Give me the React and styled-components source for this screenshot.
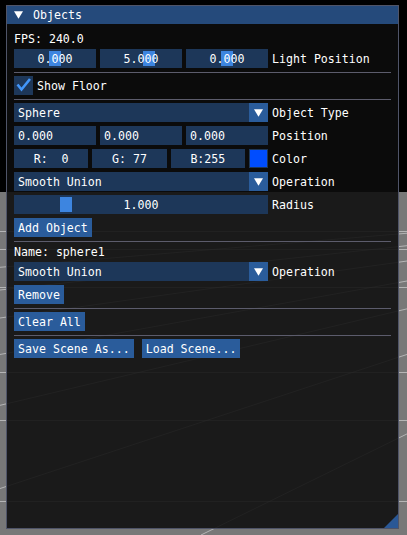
import React from 'react';
import styled, { createGlobalStyle } from 'styled-components';

const FRAME = '#1d3759';
const BUTTON = '#2a5c9b';
const TITLE = '#254a7b';
const SEP = '#5c5c6c';
const BORDER = '#4f5468';
const GRAB = '#3d85e0';
const CHECK = '#4296fa';

const GlobalStyle = createGlobalStyle`
  html, body {
    margin: 0;
    padding: 0;
    background: #000;
    overflow: hidden;
  }
  * { box-sizing: border-box; }
`;

const Page = styled.div`
  position: relative;
  width: 407px;
  height: 535px;
  overflow: hidden;
  font-family: "DejaVu Sans Mono", "Liberation Mono", monospace;
  font-size: 11.6px;
  color: #fff;
`;

const Scene = styled.svg`
  position: absolute;
  left: 0;
  top: 0;
`;

const Window = styled.div`
  position: absolute;
  left: 6px;
  top: 5px;
  width: 393px;
  height: 524px;
  border: 1px solid ${BORDER};
  background: rgba(12, 12, 12, 0.88);
  display: flex;
  flex-direction: column;
`;

const TitleBar = styled.div`
  height: 18px;
  background: ${TITLE};
  display: flex;
  align-items: center;
  padding-left: 7px;
  gap: 10px;
  line-height: 18px;
`;

const Content = styled.div`
  flex: 1;
  padding: 8px 7px;
  display: flex;
  flex-direction: column;
  gap: 4px;
`;

const Text = styled.div`
  height: 13px;
  line-height: 14px;
  white-space: pre;
`;

const Row = styled.div`
  display: flex;
  align-items: center;
  gap: ${p => p.$gap || 4}px;
  height: 19px;
`;

const Group = styled.div`
  width: 254px;
  display: grid;
  grid-template-columns: ${p => p.$cols};
  gap: 4px;
`;

const Frame = styled.div`
  position: relative;
  height: 19px;
  line-height: 20px;
  background: ${FRAME};
  padding: 0 4px;
  white-space: pre;
  text-align: ${p => p.$center ? 'center' : 'left'};
  overflow: hidden;
`;

const FrameText = styled.span`
  position: relative;
`;

const Grab = styled.div`
  position: absolute;
  top: 2px;
  width: 12px;
  height: 15px;
  background: ${GRAB};
`;

const Label = styled.span`
  line-height: 20px;
  white-space: pre;
`;

const ComboBox = styled.div`
  width: 254px;
  height: 19px;
  display: flex;
  background: ${FRAME};
`;

const ComboText = styled.div`
  flex: 1;
  padding-left: 4px;
  line-height: 20px;
`;

const ArrowBtn = styled.div`
  width: 19px;
  height: 19px;
  background: ${BUTTON};
  display: flex;
  align-items: center;
  justify-content: center;
`;

const Swatch = styled.div`
  height: 19px;
  background: ${p => p.$color};
  border: 1px solid ${FRAME};
`;

const CheckBox = styled.div`
  width: 19px;
  height: 19px;
  background: ${FRAME};
  display: flex;
  align-items: center;
  justify-content: center;
`;

const Button = styled.div`
  height: 19px;
  line-height: 20px;
  padding: 0 4px;
  background: ${BUTTON};
  white-space: pre;
`;

const Separator = styled.div`
  height: 1px;
  background: ${SEP};
  margin-bottom: -1px;
`;

const ResizeGrip = styled.svg`
  position: absolute;
  right: 0;
  bottom: 0;
`;

const DownArrow = () => (
  <svg width="9" height="8" viewBox="0 0 9 8">
    <polygon points="0,0.2 9,0.2 4.5,7.8" fill="#fff" />
  </svg>
);

const Slider = ({ value, min, max, width, center = true }) => {
  const t = (value - min) / (max - min);
  const left = 2 + (width - 4 - 12) * t;
  return (
    <Frame $center={center}>
      <Grab style={{ left }} />
      <FrameText>{value.toFixed(3)}</FrameText>
    </Frame>
  );
};

const Combo = ({ text }) => (
  <ComboBox>
    <ComboText>{text}</ComboText>
    <ArrowBtn><DownArrow /></ArrowBtn>
  </ComboBox>
);

const horizon = 192;
const vp = 900;
const hLines = [231, 249, 287, 372, 420, 501];
const dLines = [201, -141, -547, -1000, -1550, -2250, -3200];

const Background = () => (
  <Scene width="407" height="535" viewBox="0 0 407 535">
    <rect x="0" y="0" width="407" height={horizon} fill="#000" />
    <rect x="0" y={horizon} width="407" height={535 - horizon} fill="#787878" />
    {hLines.map(y => (
      <line key={y} x1="0" y1={y + 0.5} x2="407" y2={y + 0.5} stroke="#fff" strokeOpacity="0.45" strokeWidth="1" />
    ))}
    {dLines.map(x => (
      <line key={x} x1={vp} y1={horizon} x2={x} y2="535" stroke="#fff" strokeOpacity="0.45" strokeWidth="1" />
    ))}
  </Scene>
);

export default function App() {
  return (
    <Page>
      <GlobalStyle />
      <Background />
      <Window>
        <TitleBar>
          <DownArrow />
          <span>Objects</span>
        </TitleBar>
        <Content>
          <Text>FPS: 240.0</Text>
          <Row>
            <Group $cols="1fr 1fr 1fr">
              <Slider value={0} min={-20} max={20} width={82} />
              <Slider value={5} min={-20} max={20} width={82} />
              <Slider value={0} min={-20} max={20} width={82} />
            </Group>
            <Label>Light Position</Label>
          </Row>
          <Separator />
          <Row>
            <CheckBox>
              <svg width="19" height="19" viewBox="0 0 19 19">
                <polyline points="3.5,8.5 7.5,13.5 16,3" fill="none" stroke={CHECK} strokeWidth="2.6" />
              </svg>
            </CheckBox>
            <Label>Show Floor</Label>
          </Row>
          <Separator />
          <Row>
            <Combo text="Sphere" />
            <Label>Object Type</Label>
          </Row>
          <Row>
            <Group $cols="1fr 1fr 1fr">
              <Frame>0.000</Frame>
              <Frame>0.000</Frame>
              <Frame>0.000</Frame>
            </Group>
            <Label>Position</Label>
          </Row>
          <Row>
            <Group $cols="1fr 1fr 1fr 19px">
              <Frame $center>R:  0</Frame>
              <Frame $center>G: 77</Frame>
              <Frame $center>B:255</Frame>
              <Swatch $color="#004dff" />
            </Group>
            <Label>Color</Label>
          </Row>
          <Row>
            <Combo text="Smooth Union" />
            <Label>Operation</Label>
          </Row>
          <Row>
            <Group $cols="1fr">
              <Slider value={1} min={0.1} max={5} width={254} />
            </Group>
            <Label>Radius</Label>
          </Row>
          <Row>
            <Button>Add Object</Button>
          </Row>
          <Separator />
          <Text>Name: sphere1</Text>
          <Row>
            <Combo text="Smooth Union" />
            <Label>Operation</Label>
          </Row>
          <Row>
            <Button>Remove</Button>
          </Row>
          <Separator />
          <Row>
            <Button>Clear All</Button>
          </Row>
          <Separator />
          <Row $gap={8}>
            <Button>Save Scene As...</Button>
            <Button>Load Scene...</Button>
          </Row>
        </Content>
        <ResizeGrip width="14" height="14" viewBox="0 0 14 14">
          <polygon points="14,0 14,14 0,14" fill="#2a5896" />
        </ResizeGrip>
      </Window>
    </Page>
  );
}
